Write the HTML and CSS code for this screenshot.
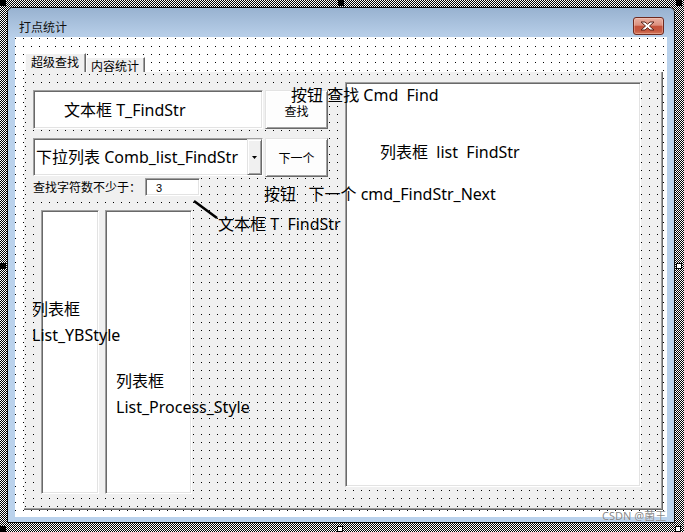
FILE: index.html
```html
<!DOCTYPE html>
<html lang="zh-CN">
<head>
<meta charset="utf-8">
<title>打点统计</title>
<link rel="stylesheet" href="styles.css">
</head>
<body>
<div class="designer">
  <div class="window">
    <div class="titlebar">
      <span class="title">打点统计</span>
      <div class="close-btn">
        <svg class="close-x" width="29" height="16" viewBox="0 0 29 16">
          <polygon points="7,4 11,4 13.5,6.22 16,4 20,4 15.5,8 20,12 16,12 13.5,9.78 11,12 7,12 11.5,8" fill="#fff" stroke="#5a2218" stroke-width="1" stroke-linejoin="round"/>
        </svg>
      </div>
    </div>
    <div class="frame">
      <div class="client">
        <div class="tabs">
          <div class="tab active">超级查找</div>
          <div class="tab">内容统计</div>
        </div>
        <div class="page">
          <div class="ctl sunken textbox tb-find"><span class="anno-in">文本框 T_FindStr</span></div>
          <div class="ctl raised button btn-find">查找</div>
          <div class="ctl sunken combo">
            <span class="combo-text anno-in">下拉列表 Comb_list_FindStr</span>
            <span class="raised drop-btn"><svg width="5" height="3" viewBox="0 0 5 3"><polygon points="0,0 5,0 2.5,3" fill="#000"/></svg></span>
          </div>
          <div class="ctl raised button btn-next">下一个</div>
          <div class="ctl label-min">查找字符数不少于：</div>
          <div class="ctl sunken tb-num">3</div>
          <div class="ctl sunken listbox lb-yb"></div>
          <div class="ctl sunken listbox lb-proc"></div>
          <div class="ctl sunken listbox lb-find"></div>

          <svg class="pointer-line" width="28" height="22" viewBox="0 0 28 22">
            <line x1="2" y1="2" x2="25" y2="19" stroke="#000" stroke-width="2.6"/>
          </svg>

          <div class="anno a-cmdfind">按钮 查找 Cmd  Find</div>
          <div class="anno a-listfind">列表框  list  FindStr</div>
          <div class="anno a-next">按钮   下一个 cmd_FindStr_Next</div>
          <div class="anno a-tbline">文本框 T  FindStr</div>
          <div class="anno twoline a-yb">列表框<br>List_YBStyle</div>
          <div class="anno twoline a-proc">列表框<br>List_Process_Style</div>
        </div>
      </div>
    </div>
  </div>

  <span class="handle black h-tl"></span>
  <span class="handle black h-tm"></span>
  <span class="handle black h-tr"></span>
  <span class="handle black h-lm"></span>
  <span class="handle white h-rm"></span>
  <span class="handle black h-bl"></span>
  <span class="handle white h-bm"></span>
  <span class="handle white h-br"></span>

  <span class="watermark">CSDN @菌王</span>
</div>
</body>
</html>
```

FILE: styles.css
```css
* { box-sizing: border-box; }
html, body { margin: 0; padding: 0; }
body {
  width: 684px;
  height: 532px;
  overflow: hidden;
  background: #fff;
  font-family: "Noto Sans CJK SC", "Noto Sans", sans-serif;
  color: #000;
}

.designer {
  position: relative;
  width: 684px;
  height: 532px;
  padding: 7px 9px 9px 7px;
  background-color: #fff;
  background-image: repeating-conic-gradient(#000 0 25%, #fff 0 50%);
  background-size: 2px 2px;
}

.window {
  width: 668px;
  height: 516px;
  border: 1px solid #101010;
  border-radius: 6px 6px 0 0;
  overflow: hidden;
  display: flex;
  flex-direction: column;
  background: #bad2ec;
}

.titlebar {
  flex: none;
  height: 29px;
  display: flex;
  align-items: flex-start;
  justify-content: space-between;
  padding: 0 10px 0 11px;
  background: linear-gradient(#98b2d0, #b8cfe9);
}

.title {
  margin-top: 13px;
  font-size: 12px;
  line-height: 12px;
  color: #111;
}

.close-btn {
  margin-top: 9px;
  width: 31px;
  height: 18px;
  border: 1px solid #6e2a1f;
  border-radius: 3px;
  background: linear-gradient(#e9b2a4 0%, #dc8f7d 45%, #c5523b 52%, #c65840 80%, #d57a5e 100%);
  box-shadow: inset 0 0 0 1px rgba(255, 220, 210, 0.35);
  display: flex;
  align-items: center;
  justify-content: center;
}
.close-x { display: block; }

.frame {
  flex: 1;
  display: flex;
  padding: 0 7px 5px 7px;
  background: #bad2ec;
}

.client {
  flex: 1;
  padding: 16px 0 0 9px;
  background-color: #fff;
  background-image: conic-gradient(from 270deg at 1px 1px, #000 90deg, transparent 0);
  background-size: 8px 8px;
  background-position: 0 1px;
}

.tabs {
  display: flex;
  align-items: flex-end;
  height: 19px;
  margin-left: 1px;
}

.tab {
  font-size: 12px;
  line-height: 12px;
  height: 15px;
  width: 59px;
  padding: 2px 0 0 4px;
  background: #f0f0f0;
  border: 1px solid;
  border-bottom: 0;
  border-color: #fff #696969 transparent #fcfcfc;
  box-shadow: inset -1px 0 #a0a0a0;
  white-space: nowrap;
}
.tab.active {
  height: 19px;
  width: 61px;
  padding-left: 5px;
}

.page {
  position: relative;
  width: 639px;
  height: 438px;
  background-color: #f0f0f0;
  background-image: conic-gradient(from 270deg at 1px 1px, #000 90deg, transparent 0);
  background-size: 8px 8px;
  background-position: 1px 2px;
  border-right: 1px solid #696969;
  border-bottom: 1px solid #696969;
  box-shadow: inset -1px -1px #a0a0a0;
}

.ctl { position: absolute; }

.sunken {
  background: #fff;
  border: 1px solid;
  border-color: #a0a0a0 #fff #fff #a0a0a0;
  box-shadow: inset 1px 1px #696969, inset -1px -1px #e3e3e3;
}

.raised {
  background: #fdfdfd;
  border: 1px solid;
  border-color: #e3e3e3 #696969 #696969 #e3e3e3;
  box-shadow: inset 1px 1px #fff, inset -1px -1px #a0a0a0;
}

.anno-in,
.anno {
  font-family: "Noto Sans", "Noto Sans CJK SC", sans-serif;
  font-size: 16px;
  line-height: 16px;
  white-space: pre;
  color: #000;
}

.textbox {
  display: flex;
  align-items: center;
  padding-left: 30px;
}
.tb-find { left: 9px; top: 18px; width: 230px; height: 39px; }

.button {
  display: flex;
  align-items: center;
  justify-content: center;
  font-size: 12px;
  line-height: 12px;
}
.btn-find { left: 241px; top: 18px; width: 63px; height: 39px; padding-top: 2px; }
.btn-next { left: 241px; top: 66px; width: 63px; height: 39px; }

.combo {
  left: 9px;
  top: 66px;
  width: 230px;
  height: 38px;
  display: flex;
  align-items: stretch;
}
.combo-text {
  flex: 1;
  display: flex;
  align-items: center;
  padding-left: 2px;
  overflow: hidden;
}
.drop-btn {
  flex: none;
  width: 15px;
  display: flex;
  align-items: center;
  justify-content: center;
  background: #f0f0f0;
  padding-top: 1px;
}
.drop-btn svg { display: block; }

.label-min {
  left: 9px;
  top: 105px;
  width: 112px;
  height: 20px;
  background: #f0f0f0;
  font-size: 12px;
  line-height: 20px;
  white-space: nowrap;
}

.tb-num {
  left: 121px;
  top: 106px;
  width: 55px;
  height: 18px;
  padding: 0 0 0 10px;
  font-family: "Liberation Sans", Arial, sans-serif;
  font-size: 11px;
  line-height: 18px;
}

.lb-yb { left: 17px; top: 138px; width: 58px; height: 284px; }
.lb-proc { left: 81px; top: 138px; width: 87px; height: 284px; }
.lb-find { left: 321px; top: 10px; width: 296px; height: 405px; }

.pointer-line {
  position: absolute;
  left: 168px;
  top: 127px;
  display: block;
}

.anno { position: absolute; }
.a-cmdfind { left: 267px; top: 15px; }
.a-listfind { left: 356px; top: 72px; }
.a-next { left: 240px; top: 114px; }
.a-tbline { left: 194px; top: 144px; }
.twoline { line-height: 25.5px; }
.a-yb { left: 8px; top: 225px; }
.a-proc { left: 92px; top: 297px; }

.handle {
  position: absolute;
  width: 6px;
  height: 6px;
}
.handle.black { background: #000; }
.handle.white { background: #fff; border: 1px solid #000; }
.h-tl { left: 0; top: 0; }
.h-tm { left: 338px; top: 0; }
.h-tr { left: 676px; top: 0; }
.h-lm { left: 0; top: 263px; }
.h-rm { left: 676px; top: 263px; }
.h-bl { left: 0; top: 526px; }
.h-bm { left: 337px; top: 526px; }
.h-br { left: 675px; top: 526px; }

.watermark {
  position: absolute;
  left: 602px;
  top: 510px;
  font-family: "Noto Sans", "Noto Sans CJK SC", sans-serif;
  font-size: 11px;
  line-height: 12px;
  color: rgba(105, 105, 105, 0.8);
  text-shadow: 0 0 1px rgba(255, 255, 255, 0.9);
  white-space: nowrap;
}
```
